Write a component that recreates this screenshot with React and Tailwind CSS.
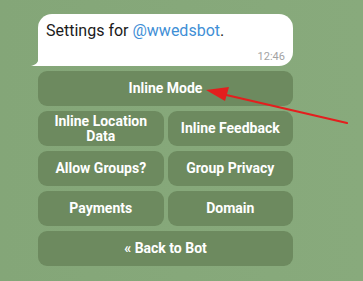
import React from 'react'

const rows = [
  ['Inline Mode'],
  ['Inline Location Data', 'Inline Feedback'],
  ['Allow Groups?', 'Group Privacy'],
  ['Payments', 'Domain'],
  ['« Back to Bot'],
]

export default function App() {
  return (
    <div className="relative h-[281px] w-[363px] overflow-hidden bg-gradient-to-r from-[#84a678] to-[#88aa7c] font-['Roboto',sans-serif]">
      <div className="ml-[38px] mt-[14px] w-[255px]">
        {/* message bubble */}
        <div className="relative h-[52px] rounded-[14px] rounded-bl-none bg-white pl-[8px] pr-[8px] pt-[7px]">
          <svg className="absolute bottom-0 left-[-7px]" width="8" height="10" viewBox="0 0 8 10">
            <path d="M8 0 C8 6 5 9 0 10 L8 10 Z" fill="#ffffff" />
          </svg>
          <div className="text-[16px] leading-[19px] text-[#1b1b1b]">
            Settings for <span className="text-[#3f8fd6]">@wwedsbot</span>.
          </div>
          <div className="absolute bottom-[3px] right-[8px] text-[11px] leading-[12px] text-[#a3a3a3]">12:46</div>
        </div>

        {/* inline keyboard */}
        <div className="mt-[5px] flex flex-col gap-[5px]">
          {rows.map((row, i) => (
            <div key={i} className="flex gap-[4px]">
              {row.map((label) => (
                <div
                  key={label}
                  className="flex h-[35px] flex-1 items-center justify-center rounded-[9px] bg-[#6d8a5f] px-2 text-center text-[14px] font-bold leading-[15px] text-white"
                >
                  {label}
                </div>
              ))}
            </div>
          ))}
        </div>
      </div>

      {/* red arrow annotation */}
      <svg className="absolute left-0 top-0" width="363" height="281" viewBox="0 0 363 281">
        <line x1="347" y1="123" x2="222" y2="94" stroke="#e41e1e" strokeWidth="2.2" strokeLinecap="round" />
        <path d="M206 90 L229 87 L225 101 Z" fill="#e41e1e" />
      </svg>
    </div>
  )
}
